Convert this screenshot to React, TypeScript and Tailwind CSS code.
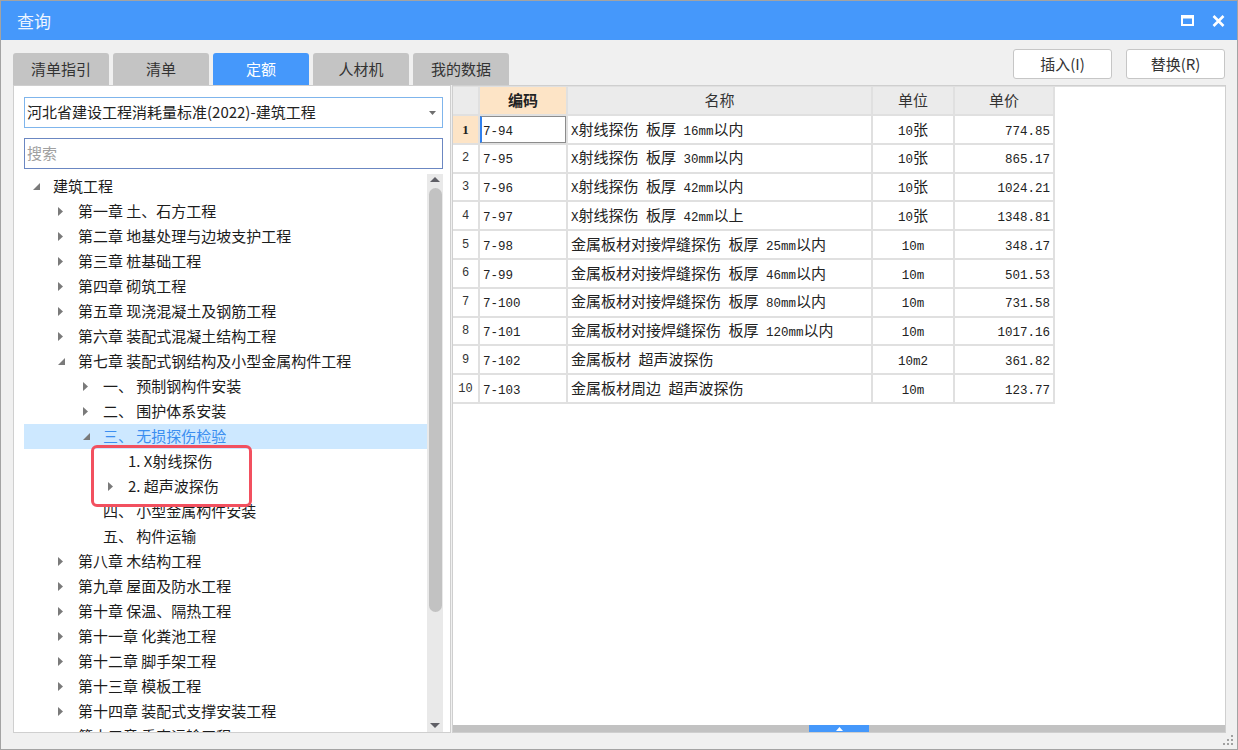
import React from "react";

type TreeNode = {
  level: number;
  label: string;
  arrow: "open" | "closed" | "none";
  selected?: boolean;
};

type Row = {
  code: string;
  name: string;
  unit: string;
  price: string;
};

const tabs = ["清单指引", "清单", "定额", "人材机", "我的数据"];

const treeNodes: TreeNode[] = [
  { level: 0, label: "建筑工程", arrow: "open" },
  { level: 1, label: "第一章 土、石方工程", arrow: "closed" },
  { level: 1, label: "第二章 地基处理与边坡支护工程", arrow: "closed" },
  { level: 1, label: "第三章 桩基础工程", arrow: "closed" },
  { level: 1, label: "第四章 砌筑工程", arrow: "closed" },
  { level: 1, label: "第五章 现浇混凝土及钢筋工程", arrow: "closed" },
  { level: 1, label: "第六章 装配式混凝土结构工程", arrow: "closed" },
  { level: 1, label: "第七章 装配式钢结构及小型金属构件工程", arrow: "open" },
  { level: 2, label: "一、 预制钢构件安装", arrow: "closed" },
  { level: 2, label: "二、 围护体系安装", arrow: "closed" },
  { level: 2, label: "三、 无损探伤检验", arrow: "open", selected: true },
  { level: 3, label: "1. X射线探伤", arrow: "none" },
  { level: 3, label: "2. 超声波探伤", arrow: "closed" },
  { level: 2, label: "四、 小型金属构件安装", arrow: "none" },
  { level: 2, label: "五、 构件运输", arrow: "none" },
  { level: 1, label: "第八章 木结构工程", arrow: "closed" },
  { level: 1, label: "第九章 屋面及防水工程", arrow: "closed" },
  { level: 1, label: "第十章 保温、隔热工程", arrow: "closed" },
  { level: 1, label: "第十一章 化粪池工程", arrow: "closed" },
  { level: 1, label: "第十二章 脚手架工程", arrow: "closed" },
  { level: 1, label: "第十三章 模板工程", arrow: "closed" },
  { level: 1, label: "第十四章 装配式支撑安装工程", arrow: "closed" },
  { level: 1, label: "第十五章 垂直运输工程", arrow: "closed" },
];

const rows: Row[] = [
  { code: "7-94", name: "X射线探伤 板厚 16mm以内", unit: "10张", price: "774.85" },
  { code: "7-95", name: "X射线探伤 板厚 30mm以内", unit: "10张", price: "865.17" },
  { code: "7-96", name: "X射线探伤 板厚 42mm以内", unit: "10张", price: "1024.21" },
  { code: "7-97", name: "X射线探伤 板厚 42mm以上", unit: "10张", price: "1348.81" },
  { code: "7-98", name: "金属板材对接焊缝探伤 板厚 25mm以内", unit: "10m", price: "348.17" },
  { code: "7-99", name: "金属板材对接焊缝探伤 板厚 46mm以内", unit: "10m", price: "501.53" },
  { code: "7-100", name: "金属板材对接焊缝探伤 板厚 80mm以内", unit: "10m", price: "731.58" },
  { code: "7-101", name: "金属板材对接焊缝探伤 板厚 120mm以内", unit: "10m", price: "1017.16" },
  { code: "7-102", name: "金属板材 超声波探伤", unit: "10m2", price: "361.82" },
  { code: "7-103", name: "金属板材周边 超声波探伤", unit: "10m", price: "123.77" },
];

// ascii runs go in a narrow mono face, like the half-width glyphs of the grid font
const Mixed = ({ text }: { text: string }) => (
  <span>
    {text
      .split(/([\x20-\x7e]+)/)
      .filter(Boolean)
      .map((part, i) =>
        /^[\x20-\x7e]+$/.test(part) ? (
          <span key={i} className="whitespace-pre font-['Liberation_Mono',monospace] text-[12.5px]">
            {part}
          </span>
        ) : (
          <span key={i}>{part}</span>
        ),
      )}
  </span>
);

const TreeArrow = ({ kind }: { kind: TreeNode["arrow"] }) => {
  if (kind === "closed") {
    return (
      <svg width="6" height="9" viewBox="0 0 6 9" className="ml-[3px]">
        <polygon points="0,0 5,4.5 0,9" fill="#7a7a7a" />
      </svg>
    );
  }
  if (kind === "open") {
    return (
      <svg width="8" height="8" viewBox="0 0 8 8" className="ml-[3px]">
        <polygon points="7,0 7,7 0,7" fill="#7a7a7a" />
      </svg>
    );
  }
  return null;
};

const cellBorder = "border-r-2 border-b-2 border-[#e0e0e0]";

export default function App() {
  return (
    <div className="relative flex h-[750px] w-[1238px] flex-col border border-[#a3a3a3] bg-[#f0f0f0] font-['Noto_Sans_CJK_SC',sans-serif] text-[#222]">
      {/* title bar */}
      <div className="flex h-[39px] items-center bg-[#4598fb] pl-[16px] pr-[12px]">
        <span className="text-[17px] text-[#eef5ff]">查询</span>
        <div className="ml-auto flex items-center gap-[18px]">
          <svg width="13" height="11" viewBox="0 0 13 11">
            <rect x="1" y="1.5" width="11" height="8.5" fill="none" stroke="#fff" strokeWidth="2" />
            <rect x="0" y="0" width="13" height="3.5" fill="#fff" />
          </svg>
          <svg width="13" height="12" viewBox="0 0 13 12">
            <path d="M1.5 1 L11.5 11 M11.5 1 L1.5 11" stroke="#fff" strokeWidth="2.6" />
          </svg>
        </div>
      </div>

      {/* tabs + buttons */}
      <div className="flex h-[45px] items-start pl-[12px] pr-[12px]">
        <div className="mt-[13px] flex gap-[4px]">
          {tabs.map((tab) => (
            <div
              key={tab}
              className={
                tab === "定额"
                  ? "flex h-[32px] w-[96px] items-center justify-center rounded-t-[3px] bg-[#4598fb] text-[15px] text-white"
                  : "flex h-[32px] w-[96px] items-center justify-center rounded-t-[3px] bg-[#c4c4c4] text-[15px] text-[#333]"
              }
            >
              {tab}
            </div>
          ))}
        </div>
        <div className="ml-auto mt-[9px] flex gap-[14px]">
          <button className="flex h-[30px] w-[99px] items-center justify-center rounded-[3px] border border-[#c6c6c6] bg-white text-[15px] text-[#333]">
            插入(I)
          </button>
          <button className="flex h-[30px] w-[99px] items-center justify-center rounded-[3px] border border-[#c6c6c6] bg-white text-[15px] text-[#333]">
            替换(R)
          </button>
        </div>
      </div>

      {/* panels */}
      <div className="flex h-[648px] gap-[1px] pl-[12px] pr-[11px]">
        {/* left: tree */}
        <div className="flex w-[438px] flex-col border border-[#cfcfcf] bg-white pl-[10px] pr-[7px] pt-[11px]">
          <div className="flex h-[31px] items-center border border-[#7fb5ec] pl-[2px] pr-[6px] text-[15px]">
            <span>河北省建设工程消耗量标准(2022)-建筑工程</span>
            <svg width="7" height="4" viewBox="0 0 7 4" className="ml-auto">
              <polygon points="0,0 7,0 3.5,4" fill="#6f6f6f" />
            </svg>
          </div>
          <div className="mt-[10px] flex h-[31px] items-center border border-[#6b87c2] pl-[2px] text-[15px] text-[#a0a0a0]">
            搜索
          </div>
          <div className="mt-[5px] flex min-h-0 flex-1">
            <div className="relative flex-1 overflow-hidden">
              {treeNodes.map((node) => (
                <div
                  key={node.label}
                  className={
                    node.selected
                      ? "flex h-[25px] items-center bg-[#cde8ff] text-[15px] text-[#3b8ef0]"
                      : "flex h-[25px] items-center text-[15px] text-[#1c1c1c]"
                  }
                  style={{ paddingLeft: 6 + 25 * node.level }}
                >
                  <div className="flex w-[23px] items-center">
                    <TreeArrow kind={node.arrow} />
                  </div>
                  <span className="whitespace-pre">{node.label}</span>
                </div>
              ))}
              <div className="absolute left-[67px] top-[271px] h-[62px] w-[161px] rounded-[6px] border-[3px] border-[#f2505f]" />
            </div>
            {/* scrollbar */}
            <div className="flex w-[16px] flex-col items-center bg-[#e9e9e9]">
              <svg width="10" height="5" viewBox="0 0 10 5" className="mt-[3px]">
                <polygon points="5,0 10,5 0,5" fill="#5f5f66" />
              </svg>
              <div className="mt-[6px] h-[424px] w-[13px] rounded-full bg-[#c2c2c2]" />
              <svg width="10" height="5" viewBox="0 0 10 5" className="mb-[4px] mt-auto">
                <polygon points="0,0 10,0 5,5" fill="#5f5f66" />
              </svg>
            </div>
          </div>
        </div>

        {/* right: grid */}
        <div className="flex flex-1 flex-col border border-[#cfcfcf] bg-white">
          <div className="flex-1 border-t border-[#e0e0e0] text-[15px] text-[#222]">
            <div className="flex h-[29px]">
              <div className={`w-[27px] bg-[#ebebeb] ${cellBorder}`} />
              <div className={`flex w-[88px] items-center justify-center bg-[#fde4c6] font-bold ${cellBorder}`}>
                编码
              </div>
              <div className={`flex w-[305px] items-center justify-center bg-[#ebebeb] text-[#333] ${cellBorder}`}>
                名称
              </div>
              <div className={`flex w-[82px] items-center justify-center bg-[#ebebeb] text-[#333] ${cellBorder}`}>
                单位
              </div>
              <div className={`flex w-[100px] items-center justify-center bg-[#ebebeb] text-[#333] ${cellBorder}`}>
                单价
              </div>
            </div>
            {rows.map((row, i) => (
              <div key={row.code} className="flex h-[28.8px]">
                {i === 0 ? (
                  <div className={`flex w-[27px] items-center justify-center bg-[#fde4c6] font-['Liberation_Serif',serif] text-[13px] font-bold ${cellBorder}`}>
                    1
                  </div>
                ) : (
                  <div className={`flex w-[27px] items-center justify-center font-['Liberation_Mono',monospace] text-[12px] text-[#333] ${cellBorder}`}>
                    {i + 1}
                  </div>
                )}
                <div className={`relative flex w-[88px] items-center pl-[3px] ${cellBorder}`}>
                  <Mixed text={row.code} />
                  {i === 0 ? (
                    <div className="absolute inset-0 border border-l-2 border-[#8c8c8c] border-l-[#2f80ee]" />
                  ) : null}
                </div>
                <div className={`flex w-[305px] items-center pl-[3px] ${cellBorder}`}>
                  <Mixed text={row.name} />
                </div>
                <div className={`flex w-[82px] items-center justify-center ${cellBorder}`}>
                  <Mixed text={row.unit} />
                </div>
                <div className={`flex w-[100px] items-center justify-end pr-[3px] ${cellBorder}`}>
                  <Mixed text={row.price} />
                </div>
              </div>
            ))}
          </div>
          <div className="flex h-[7px] justify-center bg-[#c2c2c2]">
            <div className="flex w-[60px] items-center justify-center bg-[#4598fb]">
              <svg width="7" height="4" viewBox="0 0 7 4">
                <polygon points="3.5,0 7,4 0,4" fill="#fff" />
              </svg>
            </div>
          </div>
        </div>
      </div>

      {/* resize grip */}
      <svg width="11" height="11" viewBox="0 0 11 11" className="absolute bottom-[3px] right-[3px]">
        <rect x="8" y="0" width="2" height="2" fill="#a0a0a0" />
        <rect x="8" y="4" width="2" height="2" fill="#a0a0a0" />
        <rect x="4" y="4" width="2" height="2" fill="#a0a0a0" />
        <rect x="8" y="8" width="2" height="2" fill="#a0a0a0" />
        <rect x="4" y="8" width="2" height="2" fill="#a0a0a0" />
        <rect x="0" y="8" width="2" height="2" fill="#a0a0a0" />
      </svg>
    </div>
  );
}
